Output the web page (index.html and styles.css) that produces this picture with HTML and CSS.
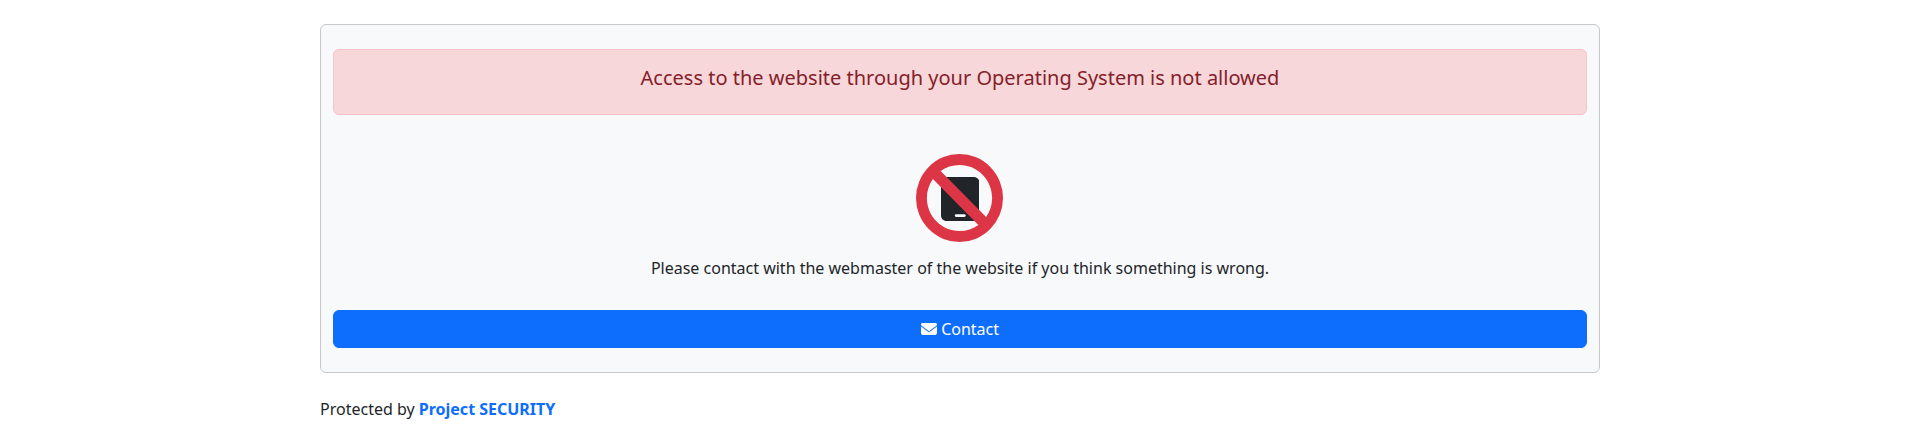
FILE: index.html
```html
<!DOCTYPE html>
<html lang="en">
<head>
<meta charset="utf-8">
<title>Project SECURITY</title>
<link rel="stylesheet" href="styles.css">
</head>
<body>
<div class="container">
  <main class="panel">
    <div class="alert"><h5 class="alert-title">Access to the website through your Operating System is not allowed</h5></div>
    <div class="icon-stack">
      <svg class="icon-device" viewBox="0 0 448 512" aria-hidden="true"><path fill="currentColor" fill-rule="evenodd" d="M64 0H384C419.300 0 448 28.700 448 64V448C448 483.300 419.300 512 384 512H64C28.700 512 0 483.300 0 448V64C0 28.700 28.700 0 64 0ZM176 432C167.200 432 160 439.200 160 448S167.200 464 176 464H272C280.800 464 288 456.800 288 448S280.800 432 272 432Z"/></svg>
      <svg class="icon-ban" viewBox="0 0 512 512" preserveAspectRatio="none" aria-hidden="true"><path fill="currentColor" d="M367.200 412.500L99.500 144.800C77.100 176.100 64 214.500 64 256c0 106 86 192 192 192c41.500 0 79.900-13.100 111.200-35.500zm45.300-45.300C434.900 335.900 448 297.500 448 256c0-106-86-192-192-192c-41.500 0-79.900 13.100-111.200 35.500L412.500 367.200zM0 256a256 256 0 1 1 512 0A256 256 0 1 1 0 256z"/></svg>
    </div>
    <p class="message">Please contact with the webmaster of the website if you think something is wrong.</p>
    <a class="button" href="#"><svg class="icon-mail" viewBox="0 0 512 512" aria-hidden="true"><path fill="currentColor" d="M48 64C21.500 64 0 85.500 0 112c0 15.100 7.100 29.300 19.200 38.400L236.800 313.600c11.400 8.500 27 8.500 38.400 0L492.800 150.400c12.100-9.100 19.200-23.300 19.200-38.400c0-26.500-21.500-48-48-48H48zM0 176V384c0 35.300 28.700 64 64 64H448c35.300 0 64-28.700 64-64V176L294.400 339.200c-22.800 17.100-54 17.100-76.800 0L0 176z"/></svg> Contact</a>
  </main>
  <footer class="footer">Protected by <a class="brand" href="#">Project SECURITY</a></footer>
</div>
</body>
</html>
```
FILE: styles.css
```css
* { box-sizing: border-box; }
body {
  margin: 0;
  background: #fff;
  color: #212529;
  font: 16px/24px "Noto Sans", "Liberation Sans", sans-serif;
}
.container {
  width: 1280px;
  margin: 0 auto;
  padding-top: 24px;
}
.panel {
  height: 349px;
  padding: 24px 12px;
  border: 1px solid #c8c9ca;
  border-radius: 6px;
  background: #f8f9fa;
  text-align: center;
}
.alert {
  height: 66px;
  padding: 16px;
  border: 1px solid #f5c2c7;
  border-radius: 6px;
  background: #f8d7da;
  color: #842029;
}
.alert-title {
  margin: 0;
  font-size: 20px;
  font-weight: 400;
  line-height: 24px;
}
.icon-stack {
  display: grid;
  align-items: center;
  justify-items: start;
  width: 88px;
  height: 88px;
  margin: 39px auto 0;
}
.icon-stack svg { grid-area: 1 / 1; }
.icon-device {
  height: 44px;
  margin: 1px 0 0 24.5px;
  color: #212529;
}
.icon-ban { width: 87px; height: 88px; color: #dc3545; }
.message { margin: 14px 0 30px; }
.button {
  display: block;
  padding: 6px 12px;
  border: 1px solid #0d6efd;
  border-radius: 6px;
  background: #0d6efd;
  color: #fff;
  text-decoration: none;
}
.icon-mail { width: 16px; height: 16px; vertical-align: -2px; }
.footer { margin-top: 24px; }
.brand { color: #0d6efd; font-weight: 700; text-decoration: none; }
```
